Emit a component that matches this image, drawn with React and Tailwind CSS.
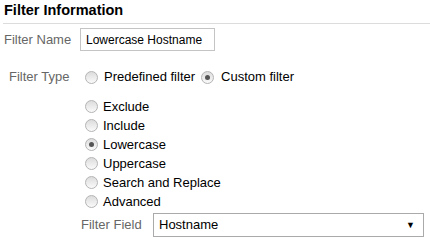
import React from "react";

function Radio({ checked }) {
  return (
    <span className="relative inline-flex w-[13px] h-[13px] shrink-0 rounded-full border border-[#b4b4b4] bg-gradient-to-b from-[#dcdcdc] to-[#fafafa] items-center justify-center">
      {checked && <span className="w-[5px] h-[5px] rounded-full bg-[#555]" />}
    </span>
  );
}

export default function App() {
  const options = [
    { label: "Exclude", checked: false },
    { label: "Include", checked: false },
    { label: "Lowercase", checked: true },
    { label: "Uppercase", checked: false },
    { label: "Search and Replace", checked: false },
    { label: "Advanced", checked: false },
  ];

  return (
    <div className="w-[430px] h-[246px] bg-white font-['Liberation_Sans',Arial,sans-serif] text-[13px] text-[#222] overflow-hidden">
      {/* HEADER */}
      <div className="ml-[3px] h-[24px] border-b border-[#dcdcdc]">
        <h2 className="pl-[1px] pt-[1px] text-[14.5px] leading-[18px] font-bold text-black">
          Filter Information
        </h2>
      </div>

      {/* FILTER NAME */}
      <div className="flex items-center mt-[4px] h-[23px]">
        <label className="w-[80px] pl-[4px] text-[#666]">Filter Name</label>
        <div className="w-[135px] h-[23px] border border-[#c4c4c4] flex items-center pl-[5px] text-[12px] text-black">
          Lowercase Hostname
        </div>
      </div>

      {/* FILTER TYPE */}
      <div className="flex items-center mt-[16px] h-[20px]">
        <label className="w-[85px] pl-[9px] text-[#666]">Filter Type</label>
        <div className="flex items-center gap-[6px]">
          <Radio />
          <span className="text-black">Predefined filter</span>
        </div>
        <div className="flex items-center gap-[7px] ml-[6px]">
          <Radio checked />
          <span className="text-black">Custom filter</span>
        </div>
      </div>

      {/* OPTIONS */}
      <div className="flex flex-col mt-[10px] pl-[85px]">
        {options.map((o) => (
          <div key={o.label} className="flex items-center gap-[5px] h-[19px]">
            <Radio checked={o.checked} />
            <span className="text-black">{o.label}</span>
          </div>
        ))}
      </div>

      {/* FILTER FIELD */}
      <div className="flex items-center mt-[2px] h-[24px]">
        <label className="w-[153px] pl-[81px] text-[#666]">Filter Field</label>
        <div className="w-[271px] h-[24px] border border-[#aaa] flex items-center justify-between pl-[5px] pr-[8px] text-black">
          <span>Hostname</span>
          <span className="text-[9px] leading-none">▼</span>
        </div>
      </div>
    </div>
  );
}
